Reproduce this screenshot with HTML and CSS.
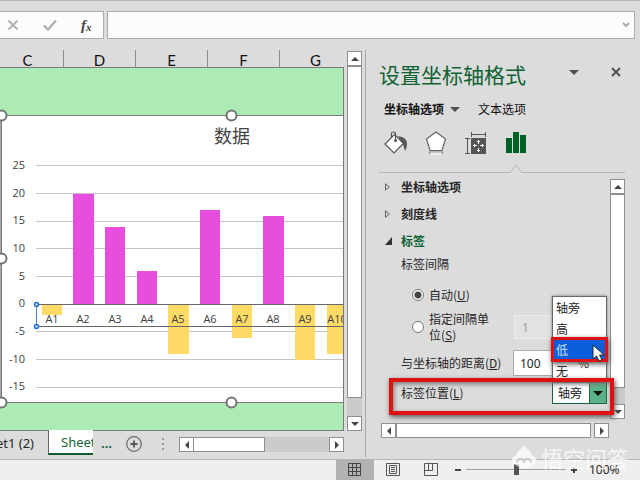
FILE: index.html
```html
<!DOCTYPE html>
<html lang="zh-CN">
  <head>
    <meta charset="utf-8" />
    <title>设置坐标轴格式</title>
    <link rel="stylesheet" href="styles.css" />
  </head>
  <body>
    <header class="formula-bar">
      <div class="formula-tools">
        <button type="button" aria-label="取消">
          <svg width="12" height="12" viewBox="0 0 12 12">
            <path d="M1.500 1.500l9 9M10.500 1.500l-9 9" stroke="#b0b0b0" stroke-width="1.800" />
          </svg>
        </button>
        <button type="button" aria-label="输入">
          <svg width="14" height="12" viewBox="0 0 14 12">
            <path d="M1 6.500l4 4L13 1.500" fill="none" stroke="#b0b0b0" stroke-width="2.400" />
          </svg>
        </button>
        <button type="button" class="fx" aria-label="插入函数">f<small>x</small></button>
      </div>
      <div class="formula-box">
        <input type="text" aria-label="编辑栏" />
        <svg width="8" height="6" viewBox="0 0 8 6">
          <path d="M1 1l3 3 3-3" fill="none" stroke="#a6a6a6" stroke-width="1.800" />
        </svg>
      </div>
    </header>

    <main class="workspace">
      <section class="book">
        <div class="sheet-row">
          <div class="sheet">
            <div class="columns">
              <span>C</span><span>D</span><span>E</span><span>F</span><span>G</span>
            </div>
            <div class="cells">
              <svg class="chart" width="480" height="362" viewBox="0 68 480 362">
                <rect x="0" y="115" width="2" height="288" fill="#a8a8a8" />
                <rect x="1.500" y="115.500" width="500" height="287" fill="#fff" stroke="#7a7a7a" />
                <text class="chart-title" x="232" y="143">数据</text>
                <path
                  class="grid"
                  d="M36 165.500H480M36 193.500H480M36 221.500H480M36 248.500H480M36 276.500H480M36 331.500H480M36 359.500H480M36 387.500H480"
                />
                <g fill="#e84edd">
                  <rect x="73" y="194" width="21" height="110" />
                  <rect x="105" y="227" width="20" height="77" />
                  <rect x="137" y="271" width="20" height="33" />
                  <rect x="200" y="210" width="20" height="94" />
                  <rect x="263" y="216" width="21" height="88" />
                </g>
                <g fill="#ffdb66">
                  <rect x="42" y="304" width="20" height="11" />
                  <rect x="168" y="304" width="21" height="50" />
                  <rect x="232" y="304" width="20" height="34" />
                  <rect x="295" y="304" width="20" height="56" />
                  <rect x="327" y="304" width="20" height="50" />
                </g>
                <path d="M36 304.500H480M36 326.500H480" stroke="#666" />
                <path d="M36.500 304V326" stroke="#4a86c8" />
                <g class="axis">
                  <text x="25" y="169">25</text>
                  <text x="25" y="197">20</text>
                  <text x="25" y="224">15</text>
                  <text x="25" y="252">10</text>
                  <text x="25" y="280">5</text>
                  <text x="25" y="307">0</text>
                  <text x="25" y="335">-5</text>
                  <text x="25" y="363">-10</text>
                  <text x="25" y="390">-15</text>
                </g>
                <g class="category">
                  <text x="52" y="323">A1</text>
                  <text x="83" y="323">A2</text>
                  <text x="115" y="323">A3</text>
                  <text x="147" y="323">A4</text>
                  <text x="178" y="323">A5</text>
                  <text x="210" y="323">A6</text>
                  <text x="242" y="323">A7</text>
                  <text x="273" y="323">A8</text>
                  <text x="305" y="323">A9</text>
                  <text x="337" y="323">A10</text>
                </g>
                <g fill="#cfe4fa" stroke="#1f6fd0" stroke-width="1.500">
                  <circle cx="36.500" cy="304.500" r="2" />
                  <circle cx="36.500" cy="326.500" r="2" />
                </g>
                <g fill="#fff" stroke="#737373" stroke-width="2">
                  <circle cx="1.500" cy="115.500" r="5" />
                  <circle cx="231.500" cy="115.500" r="5" />
                  <circle cx="1.500" cy="258.500" r="5" />
                  <circle cx="1.500" cy="402.500" r="5" />
                  <circle cx="231.500" cy="402.500" r="5" />
                </g>
              </svg>
            </div>
          </div>
          <div class="vscroll">
            <button type="button" class="scroll-btn up" aria-label="向上滚动"></button>
            <div class="thumb"></div>
            <div class="track"></div>
            <button type="button" class="scroll-btn down" aria-label="向下滚动"></button>
          </div>
        </div>
        <div class="sheet-tabs">
          <div class="tab-clip"><a href="#sheet1-2">Sheet1 (2)</a></div>
          <a class="current" href="#sheet">Sheet1</a>
          <span class="more">...</span>
          <button type="button" class="add" aria-label="新工作表">
            <svg width="16" height="16" viewBox="0 0 16 16">
              <circle cx="8" cy="8" r="7.300" fill="none" stroke="#6a6a6a" stroke-width="1.200" />
              <path d="M8 4.500v7M4.500 8h7" stroke="#555" stroke-width="1.800" />
            </svg>
          </button>
          <svg class="grip" width="2" height="12" viewBox="0 0 2 12">
            <path d="M0 0h2v2H0zM0 5h2v2H0zM0 10h2v2H0z" fill="#999" />
          </svg>
          <div class="hscroll">
            <button type="button" class="scroll-btn left" aria-label="向左滚动"></button>
            <div class="thumb"></div>
            <div class="track"></div>
            <button type="button" class="scroll-btn right" aria-label="向右滚动"></button>
          </div>
        </div>
      </section>

      <aside class="pane">
        <div class="pane-head">
          <h1>设置坐标轴格式</h1>
          <button type="button" aria-label="任务窗格选项"><i class="caret"></i></button>
          <button type="button" aria-label="关闭">
            <svg width="10" height="10" viewBox="0 0 10 10">
              <path d="M1 1l8 8M9 1l-8 8" stroke="#505050" stroke-width="2" />
            </svg>
          </button>
        </div>
        <nav class="pane-nav">
          <a class="active" href="#axis">坐标轴选项</a>
          <i class="caret"></i>
          <a href="#text">文本选项</a>
        </nav>
        <div class="pane-icons">
          <button type="button" aria-label="填充与线条">
            <svg width="24" height="24" viewBox="0 0 24 24">
              <path d="M14 5q9 1 9 8 0 4-2 7l-2-7z" fill="#555" />
              <path d="M10.500 3.500l9 9-9.500 9.500-9-9z" fill="#fff" stroke="#555" stroke-width="1.200" />
              <path d="M7.500 7V2.500q0-1.500 2-1.500t2 1.500V9" fill="none" stroke="#555" stroke-width="1.200" />
              <circle cx="11.500" cy="9.500" r="1.500" fill="#555" />
            </svg>
          </button>
          <button type="button" aria-label="效果">
            <svg width="24" height="24" viewBox="0 0 24 24">
              <defs>
                <linearGradient id="reflect" x2="0" y2="1">
                  <stop stop-color="#888" />
                  <stop offset="1" stop-color="#dcdcdc" />
                </linearGradient>
              </defs>
              <path d="M5 20.500h14l1 3.500H4z" fill="url(#reflect)" />
              <path d="M7 21.500h10l1 2.500H6z" fill="#eee" />
              <path d="M12 1l9.500 7-3.500 11.500H6L2.500 8z" fill="#fff" stroke="#666" stroke-width="1.200" />
            </svg>
          </button>
          <button type="button" aria-label="大小与属性">
            <svg width="24" height="24" viewBox="0 0 24 24">
              <path d="M7.500 1v5M21.500 1v5M7.500 3.500h14M1 7.500h5M1 22.500h5M3.500 7.500v15" stroke="#555" fill="none" />
              <path d="M7 7h15v16H7z" fill="#555" />
              <path
                d="M14 9h1v1h1v1h-1v2h-1v-2h-1v-1h1zM14 17h1v2h1v1h-1v1h-1v-1h-1v-1h1zM9 15v-1h1v-1h1v1h2v1h-2v1h-1v-1zM20 15v-1h-1v-1h-1v1h-2v1h2v1h1v-1z"
                fill="#fff"
              />
            </svg>
          </button>
          <button type="button" aria-label="坐标轴选项">
            <svg width="24" height="24" viewBox="0 0 24 24">
              <path d="M2 7h6v15H2zM9 1h6v21H9zM16 4h6v18h-6z" fill="#006127" />
            </svg>
          </button>
        </div>
        <div class="divider">
          <svg width="14" height="9" viewBox="0 0 14 9">
            <path d="M0 9h14L7 1z" fill="#dcdcdc" />
            <path d="M0 8.500h1.500L7 1l5.500 7.500H14" fill="none" stroke="#b4b4b4" />
          </svg>
        </div>

        <div class="pane-body">
          <form class="options">
            <h2><i class="closed"></i>坐标轴选项</h2>
            <h2><i class="closed"></i>刻度线</h2>
            <h2 class="open"><i class="opened"></i>标签</h2>
            <p>标签间隔</p>
            <div class="row radio-row">
              <input type="radio" name="interval" id="auto" checked />
              <label for="auto">自动(<u>U</u>)</label>
            </div>
            <div class="row radio-row unit-row">
              <input type="radio" name="interval" id="fixed" />
              <label for="fixed">指定间隔单位(<u>S</u>)</label>
              <input type="text" class="unit" value="1" aria-label="间隔单位" disabled />
            </div>
            <div class="row distance-row">
              <label for="distance">与坐标轴的距离(<u>D</u>)</label>
              <input type="text" id="distance" value="100" />
              <span class="percent">%</span>
            </div>
            <div class="row position-row">
              <label for="position">标签位置(<u>L</u>)</label>
              <div class="select">
                <select id="position">
                  <option>轴旁</option>
                  <option>高</option>
                  <option>低</option>
                  <option>无</option>
                </select>
                <i class="caret"></i>
                <ul class="menu">
                  <li>轴旁</li>
                  <li>高</li>
                  <li class="hover">
                    低
                    <svg class="pointer" width="14" height="18" viewBox="0 0 14 18">
                      <path d="M1 1v14l3.500-3 2.500 5 3-1.500L7.500 11H12z" fill="#fff" stroke="#222" />
                    </svg>
                  </li>
                  <li>无</li>
                </ul>
              </div>
              <div class="mark"></div>
            </div>
          </form>
          <div class="vscroll">
            <button type="button" class="scroll-btn up" aria-label="向上滚动"></button>
            <div class="thumb"></div>
            <div class="track"></div>
            <button type="button" class="scroll-btn down" aria-label="向下滚动"></button>
          </div>
        </div>
        <div class="hscroll">
          <button type="button" class="scroll-btn left" aria-label="向左滚动"></button>
          <div class="thumb"></div>
          <div class="track"></div>
          <button type="button" class="scroll-btn right" aria-label="向右滚动"></button>
        </div>
      </aside>
    </main>

    <footer class="status">
      <button type="button" class="view on" aria-label="普通">
        <svg width="14" height="14" viewBox="0 0 14 14">
          <path d="M.5.500h12v12H.5zM4.500.500v12M8.500.500v12M.5 4.500h12M.5 8.500h12" fill="none" stroke="#444" />
        </svg>
      </button>
      <button type="button" class="view" aria-label="页面布局">
        <svg width="14" height="14" viewBox="0 0 14 14">
          <path d="M.5.500h13v12H.5zM3.500 2.500h7v8h-7zM5 4.500h4M5 6.500h4M5 8.500h4" fill="none" stroke="#555" />
        </svg>
      </button>
      <button type="button" class="view" aria-label="分页预览">
        <svg width="14" height="14" viewBox="0 0 14 14">
          <path d="M.5.500h13v12H.5zM.5 7.500h8M4.500.500v7M8.500.500v7" fill="none" stroke="#555" />
        </svg>
      </button>
      <div class="zoom">
        <button type="button" aria-label="缩小">
          <svg width="8" height="8" viewBox="0 0 8 8"><path d="M1 4h6" stroke="#444" stroke-width="2" /></svg>
        </button>
        <input type="range" min="0" max="100" value="50" aria-label="显示比例" />
        <button type="button" aria-label="放大">
          <svg width="8" height="8" viewBox="0 0 8 8"><path d="M1 4h6M4 1v6" stroke="#444" stroke-width="2" /></svg>
        </button>
        <span>100%</span>
      </div>
    </footer>

    <div class="watermark">
      <svg width="26" height="24" viewBox="0 0 26 24">
        <path d="M13 0c1 3 8 5 8 11 5 0 6 8 0 9-4 4-12 4-16 0-6-1-5-9 0-9 0-6 6-6 8-11z" fill="#fff" />
        <path d="M6 18q0-4 3.500-4t3.500 4q0-4 3.500-4t3.500 4" fill="none" stroke="#c4c4c4" stroke-width="2" />
      </svg>
      <span>悟空问答</span>
    </div>
  </body>
</html>
```
FILE: styles.css
```css
*,
*::before,
*::after {
  box-sizing: border-box;
  margin: 0;
  padding: 0;
}

body {
  display: flex;
  flex-direction: column;
  min-height: 100vh;
  position: relative;
  overflow: hidden;
  background: #dcdcdc;
  color: #262626;
  font-family: "Noto Sans CJK SC", "Noto Sans", sans-serif;
  font-size: 12px;
  line-height: 16px;
}

button {
  border: none;
  background: none;
  display: flex;
  align-items: center;
  justify-content: center;
}

a {
  color: inherit;
  text-decoration: none;
}

svg {
  display: block;
  flex: none;
}

/* formula bar */
.formula-bar {
  display: flex;
  gap: 3px;
  padding: 10px 5px 0 0;
  border-top: 1px solid #b8b8b8;
}

.formula-tools {
  display: flex;
  align-items: center;
  gap: 24px;
  width: 104px;
  height: 28px;
  padding-left: 7px;
  background: #fcfcfc;
  border: 1px solid #adadad;
  border-left: none;
}

.fx {
  color: #444;
  font: italic bold 15px "Liberation Serif", serif;
}

.fx small {
  font-size: 11px;
  padding-top: 4px;
}

.formula-box {
  display: flex;
  align-items: center;
  flex: 1;
  padding-right: 4px;
  background: #fcfcfc;
  border: 1px solid #adadad;
}

.formula-box input {
  flex: 1;
  min-width: 0;
  border: none;
  background: none;
}

/* worksheet */
.workspace {
  display: flex;
  flex: 1;
  padding: 11px 0 2px;
}

.book {
  display: flex;
  flex-direction: column;
  flex: 1;
  min-width: 0;
  padding-right: 3px;
}

.sheet-row {
  display: flex;
  flex: 1;
  gap: 3px;
}

.sheet {
  display: flex;
  flex-direction: column;
  flex: 1;
  min-width: 0;
  overflow: hidden;
}

.columns {
  display: flex;
  margin-left: -8px;
  color: #111;
  font: 15px/20px Lato, sans-serif;
}

.columns span {
  flex: none;
  width: 72px;
  height: 17px;
  border-right: 1px solid #8c8c8c;
  text-align: center;
}

.cells {
  flex: 1;
  overflow: hidden;
  background: #adebb6;
  border: 1px solid #7a7a7a;
  border-left: none;
}

.chart-title {
  fill: #444;
  font-size: 18px;
  text-anchor: middle;
}

.grid {
  stroke: #c4c4c4;
}

.axis,
.category {
  fill: #404040;
  font: 11px "Open Sans", sans-serif;
  text-anchor: end;
}

.category {
  text-anchor: middle;
}

/* scroll bars */
.vscroll,
.hscroll {
  display: flex;
  flex: none;
}

.vscroll {
  flex-direction: column;
  width: 15px;
}

.hscroll {
  height: 15px;
}

.scroll-btn {
  flex: none;
  width: 15px;
  height: 15px;
  background: #fff;
  border: 1px solid #8f8f8f;
}

.scroll-btn::before {
  content: "";
  border: 4px solid transparent;
}

.up::before {
  border-top: none;
  border-bottom-color: #444;
}

.down::before {
  border-bottom: none;
  border-top-color: #444;
}

.left::before {
  border-left: none;
  border-right-color: #444;
}

.right::before {
  border-right: none;
  border-left-color: #444;
}

.thumb {
  flex: 1;
  background: #fff;
  border: 1px solid #8f8f8f;
}

.track {
  flex: none;
  background: #cbcbcb;
}

.sheet-row .vscroll .track {
  height: 18px;
}

.sheet-row .vscroll {
  padding-top: 1px;
}

/* sheet tabs */
.sheet-tabs {
  display: flex;
  align-items: flex-start;
  height: 26px;
  padding-right: 18px;
  font-family: "Noto Sans", sans-serif;
  font-size: 13px;
  line-height: 24px;
}

.tab-clip {
  display: flex;
  justify-content: flex-end;
  width: 48px;
  padding-right: 14px;
  overflow: hidden;
  white-space: nowrap;
}

.current {
  width: 45px;
  height: 25px;
  margin-top: -1px;
  padding-left: 12px;
  overflow: hidden;
  background: #fff;
  border-left: 1px solid #6a6a6a;
  border-bottom: 2px solid #0e5c2f;
  color: #17683a;
}

.more {
  width: 33px;
  padding-left: 8px;
  color: #17683a;
  font-weight: bold;
}

.add {
  height: 26px;
}

.grip {
  margin: 7px 15px 0 20px;
}

.sheet-tabs .hscroll {
  flex: 1;
  margin-top: 6px;
}

.sheet-tabs .track {
  width: 64px;
}

.sheet-tabs .thumb {
  border-left-width: 0;
}

/* format pane */
.pane {
  width: 275px;
  padding: 10px 15px 0 13px;
  border-left: 1px solid #a8a8a8;
}

.pane-head {
  display: flex;
  align-items: flex-start;
}

h1 {
  flex: 1;
  color: #0e6233;
  font-size: 21px;
  font-weight: normal;
  line-height: 28px;
}

.pane-head button {
  width: 18px;
  height: 24px;
}

.pane-head button + button {
  margin-left: 24px;
}

.caret {
  border: 5px solid transparent;
  border-top-color: #505050;
  border-bottom: none;
}

.pane-nav {
  display: flex;
  align-items: center;
  padding: 13px 0 0 5px;
  color: #111;
}

.pane-nav .active {
  font-weight: bold;
}

.pane-nav .caret {
  margin: 0 18px 0 6px;
}

.pane-icons {
  display: flex;
  gap: 16px;
  padding: 14px 0 8px 5px;
}

.divider {
  height: 10px;
  padding-left: 130px;
  border-bottom: 1px solid #b4b4b4;
}

.divider svg {
  position: relative;
  top: 1px;
}

.pane-body {
  display: flex;
  margin-top: 6px;
}

.pane-body .track {
  height: 16px;
}

.pane > .hscroll {
  margin: 4px 16px 0 2px;
}

.pane > .hscroll .track {
  width: 3px;
  background: none;
}

.options {
  flex: 1;
  padding: 0 3px 15px 6px;
}

.options h2 {
  display: flex;
  align-items: center;
  height: 27px;
  padding-bottom: 11px;
  font-size: 12px;
  line-height: 16px;
}

.options .open {
  height: 23px;
  padding-bottom: 7px;
  color: #0e6233;
}

.closed,
.opened {
  width: 7px;
  height: 8px;
  margin-right: 9px;
  background: #333;
  clip-path: polygon(100% 0, 100% 100%, 0 100%);
}

.closed {
  background: #666;
  clip-path: polygon(0 0, 5px 4px, 0 8px, 0 0, 1px 2px, 1px 6px, 4px 4px, 1px 2px);
}

.options p {
  padding: 0 0 0 16px;
  line-height: 16px;
}

.row {
  display: flex;
  align-items: center;
  padding-left: 16px;
}

.radio-row {
  gap: 5px;
  padding-left: 27px;
}

.radio-row input[type="radio"] {
  appearance: none;
  flex: none;
  width: 12px;
  height: 12px;
  background: #fff;
  border: 1px solid #777;
  border-radius: 50%;
}

.radio-row input[type="radio"]:checked {
  background: radial-gradient(circle, #444 3px, #fff 4px);
}

.radio-row:not(.unit-row) {
  padding-top: 15px;
}

.unit-row {
  padding-top: 8px;
}

.unit-row label {
  width: 66px;
}

.row input[type="text"] {
  height: 26px;
  padding-left: 7px;
  background: #fff;
  border: 1px solid #adadad;
  color: #222;
  font: 12px "Noto Sans", sans-serif;
}

.row input.unit[type="text"] {
  width: 60px;
  height: 24px;
  margin-left: 14px;
  background: #e2e2e2;
  border-color: #ececec;
  color: #999;
}

.distance-row {
  padding-top: 7px;
}

.distance-row label {
  width: 112px;
}

.distance-row input[type="text"] {
  width: 74px;
  padding-left: 6px;
}

.percent {
  position: relative;
  z-index: 2;
  margin-left: -9px;
}

.position-row {
  position: relative;
  justify-content: space-between;
  padding-top: 6px;
}

.select {
  display: flex;
  position: relative;
  width: 55px;
  height: 22px;
  background: #5bb28a;
  border: 1px solid #17683a;
}

.select select {
  appearance: none;
  width: 37px;
  padding-left: 5px;
  background: #fff;
  border: none;
  border-right: 1px solid #17683a;
  color: #222;
  font: inherit;
}

.select > .caret {
  margin: 8px 0 0 3px;
  border-top-color: #111;
}

.menu {
  position: absolute;
  left: -1px;
  bottom: 21px;
  width: 55px;
  background: #fff;
  border: 1px solid #666;
  box-shadow: 0 0 3px #777;
  list-style: none;
}

.menu li {
  padding: 2px 3px;
  line-height: 17px;
}

.menu .hover {
  position: relative;
  z-index: 3;
  background: #0a5fdc;
  outline: 3px solid #df1111;
  outline-offset: -1px;
  box-shadow: 1px 2px 5px 2px #555;
  color: #cfe0ff;
}

.pointer {
  position: absolute;
  right: 0;
  top: 5px;
}

/* red frame over the label position row */
.mark {
  position: absolute;
  inset: 2px -7px -11px 4px;
  z-index: 4;
  border: 4px solid #df1111;
  box-shadow: 1px 2px 5px #555, inset 1px 2px 5px #777;
  pointer-events: none;
}

/* status bar */
.status {
  display: flex;
  justify-content: flex-end;
  height: 22px;
  padding-right: 17px;
  background: #efefef;
  border-top: 1px solid #b4b4b4;
}

.view {
  width: 38px;
  padding-bottom: 2px;
}

.view.on {
  background: #b2b2b2;
}

.zoom {
  display: flex;
  align-items: center;
  margin-left: 4px;
  padding-bottom: 2px;
}

.zoom input {
  appearance: none;
  width: 100px;
  height: 12px;
  margin: 0 4px;
  background: linear-gradient(#a0a0a0, #a0a0a0) center / 100% 1px no-repeat;
}

.zoom input::-webkit-slider-thumb {
  appearance: none;
  width: 5px;
  height: 11px;
  background: #555;
}

.zoom span {
  width: 34px;
  margin-left: 11px;
  font-family: "Noto Sans", sans-serif;
}

.watermark {
  display: flex;
  align-items: center;
  gap: 4px;
  position: absolute;
  right: 11px;
  bottom: 11px;
  z-index: 5;
  color: #fff;
  font-size: 22px;
  line-height: 26px;
  opacity: 0.75;
  pointer-events: none;
}
```
